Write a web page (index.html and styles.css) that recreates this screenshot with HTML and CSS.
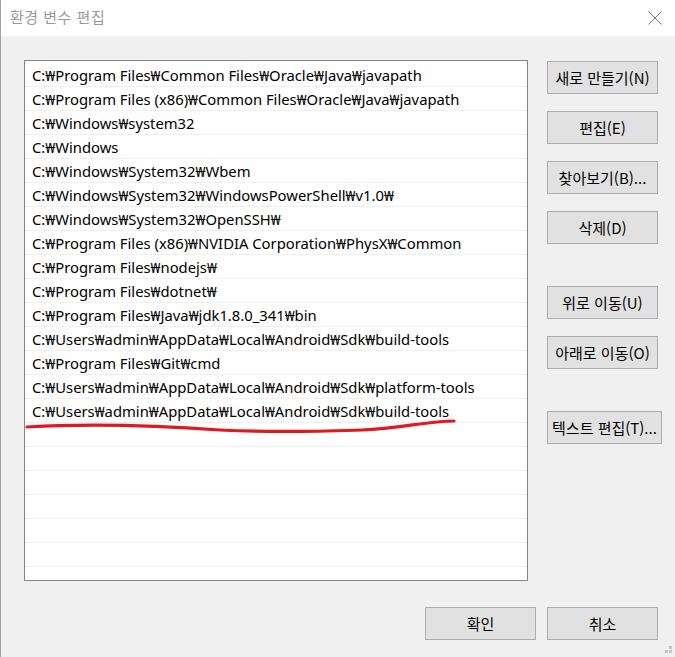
FILE: index.html
```html
<!DOCTYPE html>
<html lang="ko">
<head>
<meta charset="utf-8">
<title>환경 변수 편집</title>
<link rel="stylesheet" href="styles.css">
</head>
<body>
<div class="window">
  <div class="titlebar">
    <span class="title">환경 변수 편집</span>
    <svg class="close" width="14" height="14" viewBox="0 0 14 14"><path d="M0.5 0.5 L13.5 13.5 M13.5 0.5 L0.5 13.5" stroke="#7a7a7a" stroke-width="1" fill="none"/></svg>
  </div>
  <div class="content">
    <div class="main">
      <div class="list">
        <div class="row">C:₩Program Files₩Common Files₩Oracle₩Java₩javapath</div>
        <div class="row">C:₩Program Files (x86)₩Common Files₩Oracle₩Java₩javapath</div>
        <div class="row">C:₩Windows₩system32</div>
        <div class="row">C:₩Windows</div>
        <div class="row">C:₩Windows₩System32₩Wbem</div>
        <div class="row">C:₩Windows₩System32₩WindowsPowerShell₩v1.0₩</div>
        <div class="row">C:₩Windows₩System32₩OpenSSH₩</div>
        <div class="row">C:₩Program Files (x86)₩NVIDIA Corporation₩PhysX₩Common</div>
        <div class="row">C:₩Program Files₩nodejs₩</div>
        <div class="row">C:₩Program Files₩dotnet₩</div>
        <div class="row">C:₩Program Files₩Java₩jdk1.8.0_341₩bin</div>
        <div class="row">C:₩Users₩admin₩AppData₩Local₩Android₩Sdk₩build-tools</div>
        <div class="row">C:₩Program Files₩Git₩cmd</div>
        <div class="row">C:₩Users₩admin₩AppData₩Local₩Android₩Sdk₩platform-tools</div>
        <div class="row">C:₩Users₩admin₩AppData₩Local₩Android₩Sdk₩build-tools</div>
        <div class="row"></div>
        <div class="row"></div>
        <div class="row"></div>
        <div class="row"></div>
        <div class="row"></div>
        <div class="row"></div>
      </div>
      <div class="side">
        <button class="btn">새로 만들기(N)</button>
        <button class="btn">편집(E)</button>
        <button class="btn">찾아보기(B)...</button>
        <button class="btn">삭제(D)</button>
        <button class="btn group">위로 이동(U)</button>
        <button class="btn">아래로 이동(O)</button>
        <button class="btn group wide">텍스트 편집(T)...</button>
      </div>
    </div>
    <div class="footer">
      <button class="btn">확인</button>
      <button class="btn">취소</button>
    </div>
  </div>
  <svg class="scribble" width="675" height="657" viewBox="0 0 675 657"><path d="M27 427 C 80 424 150 425 220 430 C 280 433 330 431 362 430 C 400 428 430 421 454 421" stroke="#e0181f" stroke-width="3.2" fill="none" stroke-linecap="round"/></svg>
  <svg class="grip" width="10" height="10" viewBox="0 0 10 10"><rect x="6" y="0" width="3" height="3" fill="#c4c4c4"/><rect x="2" y="4" width="3" height="3" fill="#c4c4c4"/><rect x="6" y="4" width="3" height="3" fill="#c4c4c4"/></svg>
</div>
</body>
</html>
```

FILE: styles.css
```css
* { box-sizing: border-box; }
html, body { margin: 0; padding: 0; }
body {
  width: 675px;
  height: 657px;
  overflow: hidden;
  background: #f0f0f0;
  font-family: "Noto Sans", "Noto Sans CJK KR", sans-serif;
  font-size: 15px;
  color: #000;
}
.window {
  position: relative;
  width: 675px;
  height: 657px;
  border-left: 1px solid #a0a0a0;
  background: #f0f0f0;
  display: flex;
  flex-direction: column;
}
.titlebar {
  height: 36px;
  background: #fff;
  display: flex;
  align-items: center;
  justify-content: space-between;
  padding: 0 13px 3px 9px;
}
.title {
  font-family: "Noto Sans CJK KR", sans-serif;
  font-size: 15px;
  color: #999;
  letter-spacing: 0.5px;
}
.close { display: block; margin-top: 2px; }
.content {
  flex: 1;
  padding: 24px 0 0 23px;
  display: flex;
  flex-direction: column;
}
.main {
  display: flex;
  align-items: flex-start;
}
.list {
  width: 504px;
  height: 521px;
  border: 1px solid #828790;
  background: #fff;
  padding: 2px 0 0 0;
  overflow: hidden;
}
.row {
  height: 24px;
  border-bottom: 1px solid #f0f0f0;
  padding: 2px 0 0 7px;
  line-height: 21px;
  font-size: 14.8px;
  white-space: nowrap;
}
.side {
  margin-left: 19px;
  padding-top: 1px;
  display: flex;
  flex-direction: column;
  align-items: flex-start;
  gap: 17px;
}
.btn {
  width: 111px;
  height: 33px;
  border: 1px solid #adadad;
  background: #e1e1e1;
  font-family: "Noto Sans CJK KR", sans-serif;
  font-size: 15px;
  color: #000;
  padding: 0;
  margin: 0;
  white-space: nowrap;
}
.btn.group { margin-top: 25px; }
.btn.wide { width: 115px; }
.footer {
  margin-top: 26px;
  display: flex;
  gap: 11px;
  padding-left: 401px;
}
.scribble {
  position: absolute;
  left: -1px;
  top: 0;
  pointer-events: none;
}
.grip {
  position: absolute;
  right: 2px;
  bottom: 1px;
}
```
